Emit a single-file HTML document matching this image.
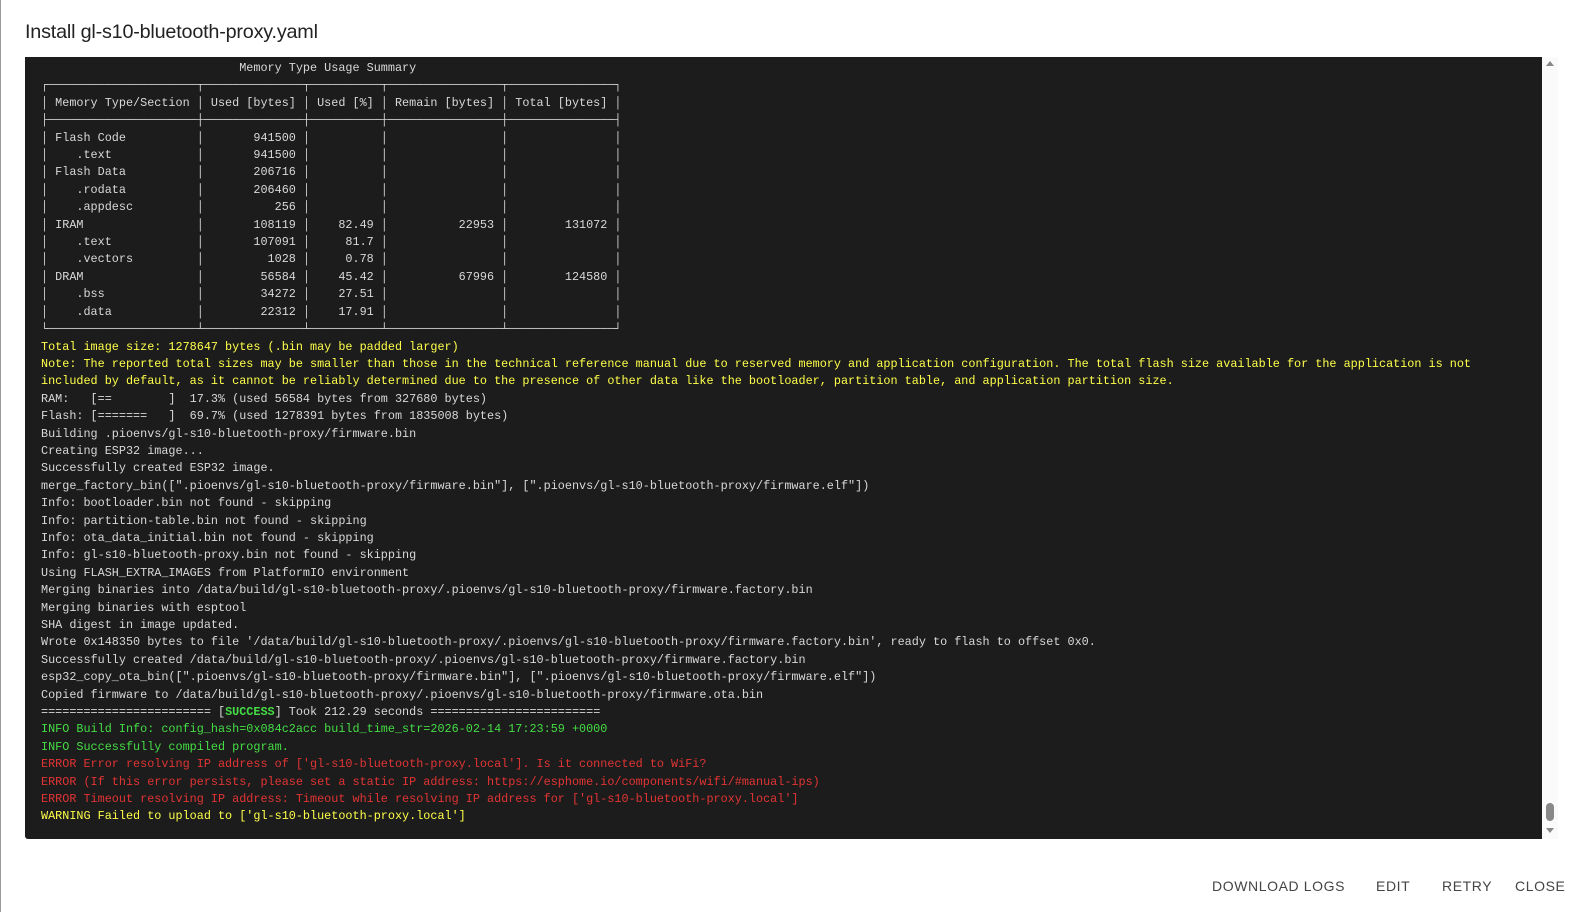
<!DOCTYPE html>
<html><head><meta charset="utf-8"><style>
html,body{margin:0;padding:0;width:1581px;height:912px;background:#fff;overflow:hidden;position:relative;font-family:"Liberation Sans",sans-serif}
.left{position:absolute;left:0;top:0;width:1px;height:912px;background:#9a9a9a}
h1{position:absolute;left:25px;top:21px;margin:0;font-weight:400;font-size:19.8px;color:#222;letter-spacing:-0.2px}
.term{position:absolute;left:25px;top:57px;width:1517px;height:782px;background:#1c1c1c;overflow:hidden;border-radius:0 0 0 3px}
pre{margin:0;position:absolute;left:16px;top:3px;font-family:"Liberation Mono","DejaVu Sans Mono",monospace;font-size:11.8px;line-height:17.4px;color:#d8d8d8;white-space:pre}
.y{color:#ffff4a}.g{color:#45dd45}.r{color:#e23434}.b{font-weight:bold}
.sb{position:absolute;left:1542px;top:57px;width:16px;height:782px;background:#fafafa}
.up{position:absolute;left:1546px;top:61px;width:0;height:0;border-left:4px solid transparent;border-right:4px solid transparent;border-bottom:5px solid #888}
.dn{position:absolute;left:1546px;top:828px;width:0;height:0;border-left:4px solid transparent;border-right:4px solid transparent;border-top:5px solid #888}
.th{position:absolute;left:1546px;top:803px;width:8px;height:18px;border-radius:4px;background:#888}
.btn{position:absolute;top:878px;font-size:14px;letter-spacing:0.6px;color:#444}
</style></head><body>
<div class="left"></div>
<h1>Install gl-s10-bluetooth-proxy.yaml</h1>
<div class="term"><pre>                            Memory Type Usage Summary
┌─────────────────────┬──────────────┬──────────┬────────────────┬───────────────┐
│ Memory Type/Section │ Used [bytes] │ Used [%] │ Remain [bytes] │ Total [bytes] │
├─────────────────────┼──────────────┼──────────┼────────────────┼───────────────┤
│ Flash Code          │       941500 │          │                │               │
│    .text            │       941500 │          │                │               │
│ Flash Data          │       206716 │          │                │               │
│    .rodata          │       206460 │          │                │               │
│    .appdesc         │          256 │          │                │               │
│ IRAM                │       108119 │    82.49 │          22953 │        131072 │
│    .text            │       107091 │     81.7 │                │               │
│    .vectors         │         1028 │     0.78 │                │               │
│ DRAM                │        56584 │    45.42 │          67996 │        124580 │
│    .bss             │        34272 │    27.51 │                │               │
│    .data            │        22312 │    17.91 │                │               │
└─────────────────────┴──────────────┴──────────┴────────────────┴───────────────┘
<span class="y">Total image size: 1278647 bytes (.bin may be padded larger)</span>
<span class="y">Note: The reported total sizes may be smaller than those in the technical reference manual due to reserved memory and application configuration. The total flash size available for the application is not</span>
<span class="y">included by default, as it cannot be reliably determined due to the presence of other data like the bootloader, partition table, and application partition size.</span>
RAM:   [==        ]  17.3% (used 56584 bytes from 327680 bytes)
Flash: [=======   ]  69.7% (used 1278391 bytes from 1835008 bytes)
Building .pioenvs/gl-s10-bluetooth-proxy/firmware.bin
Creating ESP32 image...
Successfully created ESP32 image.
merge_factory_bin([".pioenvs/gl-s10-bluetooth-proxy/firmware.bin"], [".pioenvs/gl-s10-bluetooth-proxy/firmware.elf"])
Info: bootloader.bin not found - skipping
Info: partition-table.bin not found - skipping
Info: ota_data_initial.bin not found - skipping
Info: gl-s10-bluetooth-proxy.bin not found - skipping
Using FLASH_EXTRA_IMAGES from PlatformIO environment
Merging binaries into /data/build/gl-s10-bluetooth-proxy/.pioenvs/gl-s10-bluetooth-proxy/firmware.factory.bin
Merging binaries with esptool
SHA digest in image updated.
Wrote 0x148350 bytes to file '/data/build/gl-s10-bluetooth-proxy/.pioenvs/gl-s10-bluetooth-proxy/firmware.factory.bin', ready to flash to offset 0x0.
Successfully created /data/build/gl-s10-bluetooth-proxy/.pioenvs/gl-s10-bluetooth-proxy/firmware.factory.bin
esp32_copy_ota_bin([".pioenvs/gl-s10-bluetooth-proxy/firmware.bin"], [".pioenvs/gl-s10-bluetooth-proxy/firmware.elf"])
Copied firmware to /data/build/gl-s10-bluetooth-proxy/.pioenvs/gl-s10-bluetooth-proxy/firmware.ota.bin
======================== [<span class="g b">SUCCESS</span>] Took 212.29 seconds ========================
<span class="g">INFO Build Info: config_hash=0x084c2acc build_time_str=2026-02-14 17:23:59 +0000</span>
<span class="g">INFO Successfully compiled program.</span>
<span class="r">ERROR Error resolving IP address of ['gl-s10-bluetooth-proxy.local']. Is it connected to WiFi?</span>
<span class="r">ERROR (If this error persists, please set a static IP address: https://esphome.io/components/wifi/#manual-ips)</span>
<span class="r">ERROR Timeout resolving IP address: Timeout while resolving IP address for ['gl-s10-bluetooth-proxy.local']</span>
<span class="y">WARNING Failed to upload to ['gl-s10-bluetooth-proxy.local']</span></pre></div>
<div class="sb"></div><div class="up"></div><div class="th"></div><div class="dn"></div>
<div class="btn" style="left:1212px">DOWNLOAD LOGS</div>
<div class="btn" style="left:1376px">EDIT</div>
<div class="btn" style="left:1442px">RETRY</div>
<div class="btn" style="left:1515px">CLOSE</div>
</body></html>
